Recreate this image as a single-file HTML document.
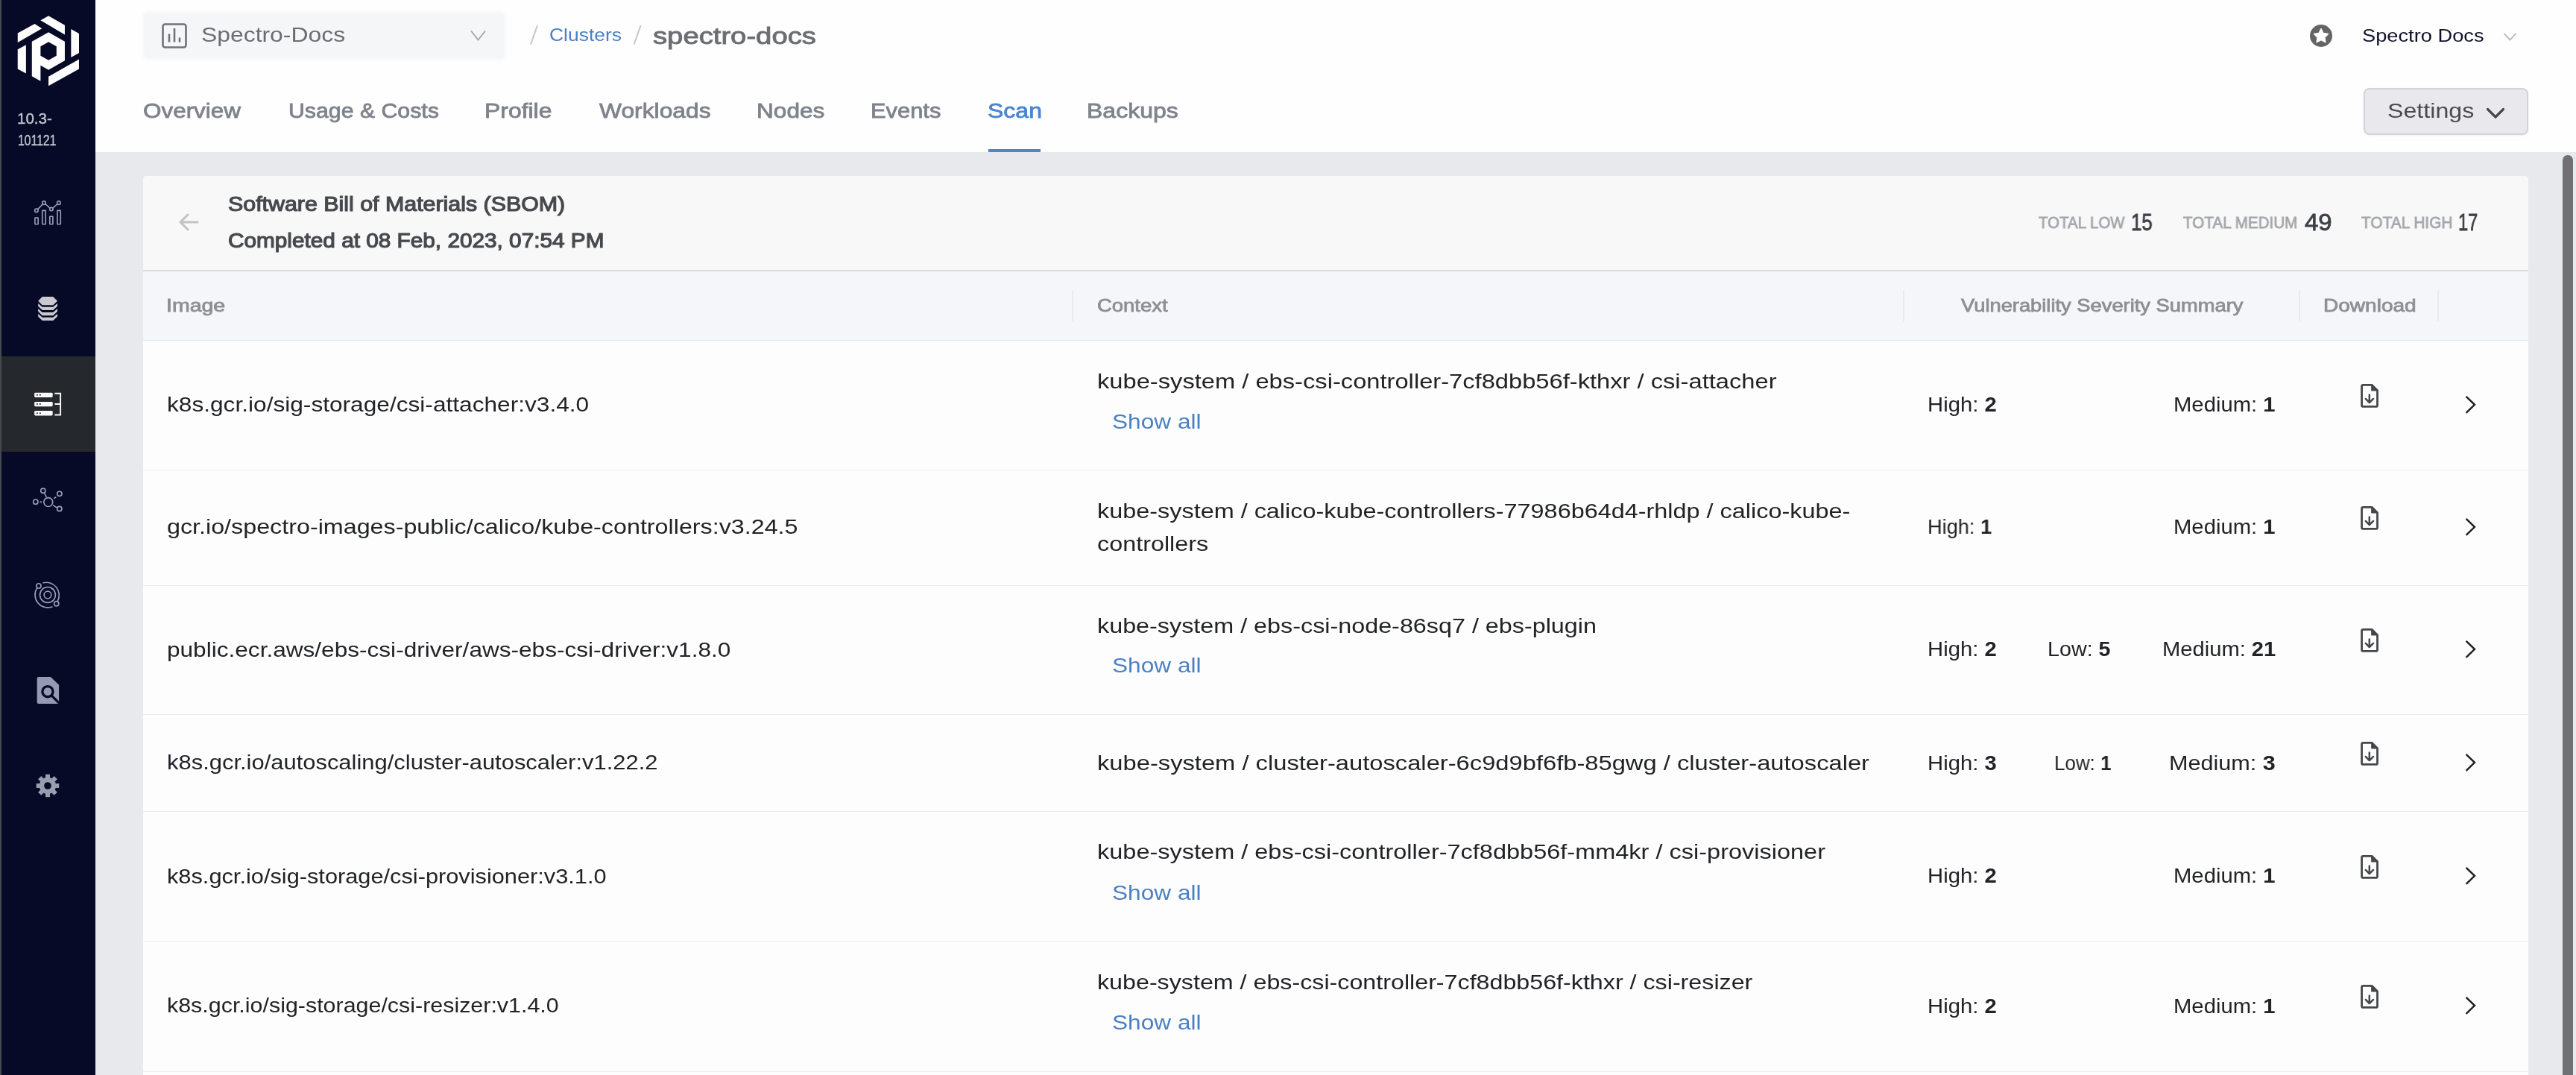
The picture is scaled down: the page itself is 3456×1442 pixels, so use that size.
<!DOCTYPE html>
<html><head><meta charset="utf-8"><title>Spectro Cloud - SBOM</title>
<style>
html,body{margin:0;padding:0}
body{width:3456px;height:1442px;overflow:hidden;position:relative;background:#e8e9ec;font-family:"Liberation Sans",sans-serif}
.a{position:absolute}
.t{position:absolute;white-space:nowrap;transform-origin:0 0;line-height:1;will-change:transform}
.t b{font-weight:bold}
svg{position:absolute;overflow:visible}
@media (max-width:2400px){body{zoom:0.5}}
</style></head><body>
<!-- sidebar -->
<div class="a" style="left:0;top:0;width:128px;height:1442px;background:#060a26"></div>
<div class="a" style="left:0;top:0;width:2px;height:1442px;background:#444b4e"></div>
<div class="a" style="left:2px;top:478px;width:126px;height:128px;background:#25282c"></div>
<svg style="left:20px;top:18px" width="90" height="100" viewBox="0 0 968 1075"><g fill="#fdfdfd">
<polygon points="40,285 285,150 390,218 40,420"/>
<polygon points="370,100 485,35 720,170 720,305"/>
<polygon points="810,225 925,290 925,570 810,635"/>
<polygon points="485,910 925,660 925,800 485,1045"/>
<polygon points="40,520 160,455 160,865 40,800"/>
<path fill-rule="evenodd" d="M245,405 L485,270 L720,405 L720,680 L485,815 L370,750 L370,975 L245,905 Z M485,410 L600,475 L600,610 L485,675 L370,610 L370,475 Z"/>
</g></svg>
<!-- chart icon -->
<svg style="left:24px;top:240px" width="80" height="80" viewBox="0 0 1075 1075"><g fill="none" stroke="#9a9cb8" stroke-width="22">
<rect x="308" y="700" width="57" height="117" rx="8"/><rect x="440" y="570" width="60" height="247" rx="8"/>
<rect x="575" y="675" width="55" height="142" rx="8"/><rect x="710" y="570" width="60" height="247" rx="8"/>
<circle cx="335" cy="570" r="30"/><circle cx="470" cy="432" r="30"/><circle cx="603" cy="545" r="30"/><circle cx="738" cy="432" r="30"/>
<path d="M356,549 L449,453 M494,450 L579,526 M627,528 L714,450"/>
</g></svg>
<!-- db icon -->
<svg style="left:24px;top:372px" width="80" height="80" viewBox="0 0 1075 1075"><g fill="#c8cad0">
<polygon points="440,350 635,350 712,425 635,500 440,500 365,425"/>
<polygon points="365,470 440,535 635,535 712,470 712,520 635,592 440,592 365,520"/>
<polygon points="365,565 440,630 635,630 712,565 712,615 635,687 440,687 365,615"/>
<polygon points="365,658 440,722 635,722 712,658 712,705 635,778 440,778 365,705"/>
</g></svg>
<!-- servers icon (selected) -->
<svg style="left:0px;top:460px" width="128" height="160" viewBox="0 0 860 1075">
<g fill="#fafafa"><rect x="310" y="448" width="165" height="42" rx="10"/><rect x="310" y="530" width="165" height="42" rx="10"/><rect x="310" y="612" width="165" height="43" rx="10"/></g>
<g fill="#25282c"><circle cx="335" cy="469" r="7"/><circle cx="362" cy="469" r="7"/><circle cx="335" cy="551" r="7"/><circle cx="362" cy="551" r="7"/><circle cx="335" cy="633" r="7"/><circle cx="362" cy="633" r="7"/></g>
<path d="M493,455 H545 V648 H493 M493,551 H545" fill="none" stroke="#fafafa" stroke-width="13"/>
</svg>
<!-- network icon -->
<svg style="left:24px;top:630px" width="80" height="80" viewBox="0 0 1075 1075"><g fill="none" stroke="#9a9cb8" stroke-width="22">
<circle cx="548" cy="585" r="80"/><circle cx="455" cy="380" r="42"/><circle cx="750" cy="435" r="42"/><circle cx="320" cy="580" r="42"/><circle cx="750" cy="705" r="42"/>
<path d="M478,420 L515,500 M648,520 L690,492 M398,582 L432,582 M630,640 L712,688"/>
</g></svg>
<!-- orbit icon -->
<svg style="left:24px;top:758px" width="80" height="80" viewBox="0 0 1075 1075"><g fill="none" stroke="#9a9cb8" stroke-width="22">
<circle cx="537" cy="537" r="65"/><circle cx="537" cy="537" r="140"/>
<path d="M450,322 A230,230 0 0 1 718,648"/><path d="M342,418 A230,230 0 0 0 625,750"/>
<circle cx="375" cy="375" r="42"/><circle cx="695" cy="695" r="42"/>
</g><circle cx="628" cy="430" r="16" fill="#9a9cb8"/></svg>
<!-- search doc icon -->
<svg style="left:24px;top:886px" width="80" height="80" viewBox="0 0 1075 1075">
<path d="M375,295 L590,295 L740,440 L740,750 Q740,780 710,780 L375,780 Q345,780 345,750 L345,325 Q345,295 375,295 Z" fill="#9799b3"/>
<g fill="none" stroke="#060a26" stroke-width="45"><circle cx="537" cy="560" r="95"/><path d="M605,630 L740,765"/></g>
</svg>
<!-- gear icon -->
<svg style="left:24px;top:1014px" width="80" height="80" viewBox="0 0 1075 1075"><g fill="#9a9cb0">
<g transform="translate(537,537)">
<rect x="-40" y="-205" width="80" height="410"/><rect x="-40" y="-205" width="80" height="410" transform="rotate(45)"/>
<rect x="-40" y="-205" width="80" height="410" transform="rotate(90)"/><rect x="-40" y="-205" width="80" height="410" transform="rotate(135)"/>
<circle r="150"/></g></g><circle cx="537" cy="537" r="65" fill="#060a26"/></svg>

<!-- header -->
<div class="a" style="left:128px;top:0;width:3328px;height:204px;background:#fefefe"></div>
<div class="a" style="left:194px;top:18px;width:482px;height:60px;background:#f5f6f8;border-radius:4px;box-shadow:0 0 5px 2px #f5f6f8"></div>
<svg style="left:0;top:0" width="3456" height="210" viewBox="0 0 3456 210">
<rect x="218.5" y="32.5" width="31" height="31" rx="3" fill="none" stroke="#6f7378" stroke-width="2.6"/>
<path d="M227,45.5 V56.5 M234,38 V56.5 M241,50.5 V56.5" stroke="#6f7378" stroke-width="2.6" fill="none"/>
<path d="M632,41.5 L641.5,53.5 L651,41.5" stroke="#a3a6aa" stroke-width="1.8" fill="none"/>
<path d="M721,34 L712,59.5 M859.6,34 L850.6,59.5" stroke="#c8c9cc" stroke-width="2.2"/>
<circle cx="3114" cy="48" r="15" fill="#646467"/>
<polygon fill="#fefefe" stroke="#fefefe" stroke-width="1.4" stroke-linejoin="round" points="3114.0,38.6 3117.0,44.5 3123.5,45.5 3118.9,50.2 3119.9,56.7 3114.0,53.7 3108.1,56.7 3109.1,50.2 3104.5,45.5 3111.0,44.5"/>
<path d="M3359.5,45 L3367.5,53.5 L3375.5,45" stroke="#b0b2b5" stroke-width="1.8" fill="none"/>
<rect x="1326" y="200" width="70" height="4" fill="#4a86d0"/>
</svg>
<div class="a" style="left:3171px;top:118px;width:217px;height:59px;background:#e9e9ed;border:2px solid #d2d3d6;border-radius:8px;box-shadow:0 1px 3px rgba(0,0,0,0.06)"></div>
<svg style="left:0;top:0" width="3456" height="210" viewBox="0 0 3456 210">
<path d="M3337.5,146.5 L3348,157 L3358.5,146.5" stroke="#45474c" stroke-width="3.2" fill="none" stroke-linecap="round" stroke-linejoin="round"/>
</svg>

<!-- card -->
<div class="a" style="left:192px;top:236px;width:3200px;height:1300px;background:#fdfdfe;border-radius:5px 5px 0 0;overflow:hidden">
  <div class="a" style="left:0;top:0;width:3200px;height:126px;background:#f8f8f9"></div>
  <div class="a" style="left:0;top:126px;width:3200px;height:2px;background:#d9dadd"></div>
  <div class="a" style="left:0;top:128px;width:3200px;height:92px;background:#f5f6f9"></div>
  <div class="a" style="left:0;top:220px;width:3200px;height:1px;background:#e4e5e8"></div>
  <div class="a" style="left:0;top:394px;width:3200px;height:1px;background:#ebebee"></div>
  <div class="a" style="left:0;top:549px;width:3200px;height:1px;background:#ebebee"></div>
  <div class="a" style="left:0;top:722px;width:3200px;height:1px;background:#ebebee"></div>
  <div class="a" style="left:0;top:852px;width:3200px;height:1px;background:#ebebee"></div>
  <div class="a" style="left:0;top:1026px;width:3200px;height:1px;background:#ebebee"></div>
  <div class="a" style="left:0;top:1201px;width:3200px;height:1px;background:#ebebee"></div>
  <div class="a" style="left:1246px;top:153px;width:2px;height:42px;background:#e9eaed"></div>
  <div class="a" style="left:2361px;top:153px;width:2px;height:42px;background:#e9eaed"></div>
  <div class="a" style="left:2892px;top:153px;width:2px;height:42px;background:#e9eaed"></div>
  <div class="a" style="left:3078px;top:153px;width:2px;height:42px;background:#e9eaed"></div>
</div>
<svg style="left:0;top:0" width="3456" height="1442" viewBox="0 0 3456 1442">
<path d="M265,298 H242.5 M252,288 L242,298 L252,308" stroke="#c2c3c6" stroke-width="3" fill="none" stroke-linecap="round" stroke-linejoin="round"/>
</svg>
<svg style="left:3140px;top:500.0px" width="200" height="80" viewBox="0 0 2576 1030"><path d="M395,212 L545,212 L638,305 L638,560 Q638,585 613,585 L393,585 Q368,585 368,560 L368,237 Q368,212 393,212 Z" fill="none" stroke="#45474a" stroke-width="36" stroke-linejoin="round"/><path d="M540,215 L540,305 L635,305 Z" fill="#45474a" stroke="#45474a" stroke-width="20" stroke-linejoin="round"/><path d="M500,380 V510 M435,450 L500,515 L567,450" fill="none" stroke="#45474a" stroke-width="32" stroke-linecap="round" stroke-linejoin="round"/><path d="M2172,410 L2318,552 L2172,695" fill="none" stroke="#1f2024" stroke-width="32"/></svg>
<svg style="left:3140px;top:664.0px" width="200" height="80" viewBox="0 0 2576 1030"><path d="M395,212 L545,212 L638,305 L638,560 Q638,585 613,585 L393,585 Q368,585 368,560 L368,237 Q368,212 393,212 Z" fill="none" stroke="#45474a" stroke-width="36" stroke-linejoin="round"/><path d="M540,215 L540,305 L635,305 Z" fill="#45474a" stroke="#45474a" stroke-width="20" stroke-linejoin="round"/><path d="M500,380 V510 M435,450 L500,515 L567,450" fill="none" stroke="#45474a" stroke-width="32" stroke-linecap="round" stroke-linejoin="round"/><path d="M2172,410 L2318,552 L2172,695" fill="none" stroke="#1f2024" stroke-width="32"/></svg>
<svg style="left:3140px;top:828.3px" width="200" height="80" viewBox="0 0 2576 1030"><path d="M395,212 L545,212 L638,305 L638,560 Q638,585 613,585 L393,585 Q368,585 368,560 L368,237 Q368,212 393,212 Z" fill="none" stroke="#45474a" stroke-width="36" stroke-linejoin="round"/><path d="M540,215 L540,305 L635,305 Z" fill="#45474a" stroke="#45474a" stroke-width="20" stroke-linejoin="round"/><path d="M500,380 V510 M435,450 L500,515 L567,450" fill="none" stroke="#45474a" stroke-width="32" stroke-linecap="round" stroke-linejoin="round"/><path d="M2172,410 L2318,552 L2172,695" fill="none" stroke="#1f2024" stroke-width="32"/></svg>
<svg style="left:3140px;top:980.0px" width="200" height="80" viewBox="0 0 2576 1030"><path d="M395,212 L545,212 L638,305 L638,560 Q638,585 613,585 L393,585 Q368,585 368,560 L368,237 Q368,212 393,212 Z" fill="none" stroke="#45474a" stroke-width="36" stroke-linejoin="round"/><path d="M540,215 L540,305 L635,305 Z" fill="#45474a" stroke="#45474a" stroke-width="20" stroke-linejoin="round"/><path d="M500,380 V510 M435,450 L500,515 L567,450" fill="none" stroke="#45474a" stroke-width="32" stroke-linecap="round" stroke-linejoin="round"/><path d="M2172,410 L2318,552 L2172,695" fill="none" stroke="#1f2024" stroke-width="32"/></svg>
<svg style="left:3140px;top:1131.8px" width="200" height="80" viewBox="0 0 2576 1030"><path d="M395,212 L545,212 L638,305 L638,560 Q638,585 613,585 L393,585 Q368,585 368,560 L368,237 Q368,212 393,212 Z" fill="none" stroke="#45474a" stroke-width="36" stroke-linejoin="round"/><path d="M540,215 L540,305 L635,305 Z" fill="#45474a" stroke="#45474a" stroke-width="20" stroke-linejoin="round"/><path d="M500,380 V510 M435,450 L500,515 L567,450" fill="none" stroke="#45474a" stroke-width="32" stroke-linecap="round" stroke-linejoin="round"/><path d="M2172,410 L2318,552 L2172,695" fill="none" stroke="#1f2024" stroke-width="32"/></svg>
<svg style="left:3140px;top:1306.3px" width="200" height="80" viewBox="0 0 2576 1030"><path d="M395,212 L545,212 L638,305 L638,560 Q638,585 613,585 L393,585 Q368,585 368,560 L368,237 Q368,212 393,212 Z" fill="none" stroke="#45474a" stroke-width="36" stroke-linejoin="round"/><path d="M540,215 L540,305 L635,305 Z" fill="#45474a" stroke="#45474a" stroke-width="20" stroke-linejoin="round"/><path d="M500,380 V510 M435,450 L500,515 L567,450" fill="none" stroke="#45474a" stroke-width="32" stroke-linecap="round" stroke-linejoin="round"/><path d="M2172,410 L2318,552 L2172,695" fill="none" stroke="#1f2024" stroke-width="32"/></svg>
<!-- scrollbar -->
<div class="a" style="left:3438px;top:208px;width:14px;height:1250px;background:#707074;border-radius:7px"></div>
<div class="t" style="left:23.4px;top:149.1px;font-size:20px;font-weight:normal;color:#c3c5d0;transform:scaleX(1.0245);-webkit-text-stroke:0.4px #c3c5d0">10.3-</div>
<div class="t" style="left:23.6px;top:177.6px;font-size:20px;font-weight:normal;color:#c3c5d0;transform:scaleX(0.7859);-webkit-text-stroke:0.4px #c3c5d0">101121</div>
<div class="t" style="left:269.7px;top:33.3px;font-size:28px;font-weight:normal;color:#6a6e73;transform:scaleX(1.1383)">Spectro-Docs</div>
<div class="t" style="left:736.5px;top:35.3px;font-size:24px;font-weight:normal;color:#4a7fc1;transform:scaleX(1.1021)">Clusters</div>
<div class="t" style="left:875.9px;top:31.5px;font-size:32px;font-weight:normal;color:#6b6e73;transform:scaleX(1.1949);-webkit-text-stroke:0.9px #6b6e73">spectro-docs</div>
<div class="t" style="left:3169.3px;top:35.7px;font-size:24px;font-weight:normal;color:#10122a;transform:scaleX(1.1352)">Spectro Docs</div>
<div class="t" style="left:191.7px;top:135.2px;font-size:28px;font-weight:normal;color:#7f838b;transform:scaleX(1.1222);-webkit-text-stroke:0.8px #7f838b">Overview</div>
<div class="t" style="left:386.5px;top:135.2px;font-size:28px;font-weight:normal;color:#7f838b;transform:scaleX(1.0809);-webkit-text-stroke:0.8px #7f838b">Usage &amp; Costs</div>
<div class="t" style="left:649.7px;top:135.2px;font-size:28px;font-weight:normal;color:#7f838b;transform:scaleX(1.1394);-webkit-text-stroke:0.8px #7f838b">Profile</div>
<div class="t" style="left:803.5px;top:135.2px;font-size:28px;font-weight:normal;color:#7f838b;transform:scaleX(1.1357);-webkit-text-stroke:0.8px #7f838b">Workloads</div>
<div class="t" style="left:1014.7px;top:135.2px;font-size:28px;font-weight:normal;color:#7f838b;transform:scaleX(1.1291);-webkit-text-stroke:0.8px #7f838b">Nodes</div>
<div class="t" style="left:1167.8px;top:135.2px;font-size:28px;font-weight:normal;color:#7f838b;transform:scaleX(1.1017);-webkit-text-stroke:0.8px #7f838b">Events</div>
<div class="t" style="left:1324.9px;top:135.2px;font-size:28px;font-weight:normal;color:#4a86d0;transform:scaleX(1.1429);-webkit-text-stroke:0.8px #4a86d0">Scan</div>
<div class="t" style="left:1458.4px;top:135.2px;font-size:28px;font-weight:normal;color:#7f838b;transform:scaleX(1.1428);-webkit-text-stroke:0.8px #7f838b">Backups</div>
<div class="t" style="left:3202.9px;top:135.3px;font-size:28px;font-weight:normal;color:#4a4b50;transform:scaleX(1.1495)">Settings</div>
<div class="t" style="left:305.9px;top:260.3px;font-size:28px;font-weight:normal;color:#47494d;transform:scaleX(1.0845);-webkit-text-stroke:1.2px #47494d">Software Bill of Materials (SBOM)</div>
<div class="t" style="left:305.9px;top:308.5px;font-size:28px;font-weight:normal;color:#47494d;transform:scaleX(1.0626);-webkit-text-stroke:1.2px #47494d">Completed at 08 Feb, 2023, 07:54 PM</div>
<div class="t" style="left:2734.6px;top:287.7px;font-size:22px;font-weight:normal;color:#a4a6ab;transform:scaleX(0.9288);-webkit-text-stroke:0.8px #a4a6ab">TOTAL LOW</div>
<div class="t" style="left:2859.4px;top:281.6px;font-size:32px;font-weight:normal;color:#3e4045;transform:scaleX(0.8080);-webkit-text-stroke:0.8px #3e4045">15</div>
<div class="t" style="left:2929.0px;top:287.7px;font-size:22px;font-weight:normal;color:#a4a6ab;transform:scaleX(0.9388);-webkit-text-stroke:0.8px #a4a6ab">TOTAL MEDIUM</div>
<div class="t" style="left:3091.8px;top:281.6px;font-size:32px;font-weight:normal;color:#3e4045;transform:scaleX(1.0317);-webkit-text-stroke:0.8px #3e4045">49</div>
<div class="t" style="left:3168.3px;top:287.7px;font-size:22px;font-weight:normal;color:#a4a6ab;transform:scaleX(0.9474);-webkit-text-stroke:0.8px #a4a6ab">TOTAL HIGH</div>
<div class="t" style="left:3298.1px;top:281.6px;font-size:32px;font-weight:normal;color:#3e4045;transform:scaleX(0.7379);-webkit-text-stroke:0.8px #3e4045">17</div>
<div class="t" style="left:222.6px;top:398.0px;font-size:24px;font-weight:normal;color:#8c8f95;transform:scaleX(1.1872);-webkit-text-stroke:0.8px #8c8f95">Image</div>
<div class="t" style="left:1471.9px;top:398.0px;font-size:24px;font-weight:normal;color:#8c8f95;transform:scaleX(1.1433);-webkit-text-stroke:0.8px #8c8f95">Context</div>
<div class="t" style="left:2631.0px;top:398.0px;font-size:24px;font-weight:normal;color:#8c8f95;transform:scaleX(1.1379);-webkit-text-stroke:0.8px #8c8f95">Vulnerability Severity Summary</div>
<div class="t" style="left:3116.6px;top:398.0px;font-size:24px;font-weight:normal;color:#8c8f95;transform:scaleX(1.1678);-webkit-text-stroke:0.8px #8c8f95">Download</div>
<div class="t" style="left:224.2px;top:528.8px;font-size:28px;font-weight:normal;color:#222326;transform:scaleX(1.1298)">k8s.gcr.io/sig-storage/csi-attacher:v3.4.0</div>
<div class="t" style="left:1471.8px;top:498.3px;font-size:28px;font-weight:normal;color:#222326;transform:scaleX(1.1669)">kube-system / ebs-csi-controller-7cf8dbb56f-kthxr / csi-attacher</div>
<div class="t" style="left:1492.4px;top:552.0px;font-size:28px;font-weight:normal;color:#4a80c4;transform:scaleX(1.1302)">Show all</div>
<div class="t" style="left:2585.9px;top:529.3px;font-size:28px;font-weight:normal;color:#222326;transform:scaleX(1.0448)">High: <b>2</b></div>
<div class="t" style="left:2916.2px;top:529.3px;font-size:28px;font-weight:normal;color:#222326;transform:scaleX(1.0449)">Medium: <b>1</b></div>
<div class="t" style="left:224.1px;top:693.0px;font-size:28px;font-weight:normal;color:#222326;transform:scaleX(1.1524)">gcr.io/spectro-images-public/calico/kube-controllers:v3.24.5</div>
<div class="t" style="left:1471.8px;top:671.7px;font-size:28px;font-weight:normal;color:#222326;transform:scaleX(1.1571)">kube-system / calico-kube-controllers-77986b64d4-rhldp / calico-kube-</div>
<div class="t" style="left:1471.8px;top:716.0px;font-size:28px;font-weight:normal;color:#222326;transform:scaleX(1.1553)">controllers</div>
<div class="t" style="left:2586.1px;top:693.3px;font-size:28px;font-weight:normal;color:#222326;transform:scaleX(0.9705)">High: <b>1</b></div>
<div class="t" style="left:2916.2px;top:693.3px;font-size:28px;font-weight:normal;color:#222326;transform:scaleX(1.0449)">Medium: <b>1</b></div>
<div class="t" style="left:224.2px;top:857.5px;font-size:28px;font-weight:normal;color:#222326;transform:scaleX(1.1278)">public.ecr.aws/ebs-csi-driver/aws-ebs-csi-driver:v1.8.0</div>
<div class="t" style="left:1471.8px;top:825.9px;font-size:28px;font-weight:normal;color:#222326;transform:scaleX(1.1541)">kube-system / ebs-csi-node-86sq7 / ebs-plugin</div>
<div class="t" style="left:1492.4px;top:879.0px;font-size:28px;font-weight:normal;color:#4a80c4;transform:scaleX(1.1302)">Show all</div>
<div class="t" style="left:2585.9px;top:857.3px;font-size:28px;font-weight:normal;color:#222326;transform:scaleX(1.0448)">High: <b>2</b></div>
<div class="t" style="left:2747.3px;top:857.3px;font-size:28px;font-weight:normal;color:#222326;transform:scaleX(1.0247)">Low: <b>5</b></div>
<div class="t" style="left:2900.5px;top:857.3px;font-size:28px;font-weight:normal;color:#222326;transform:scaleX(1.0409)">Medium: <b>21</b></div>
<div class="t" style="left:224.2px;top:1008.9px;font-size:28px;font-weight:normal;color:#222326;transform:scaleX(1.1046)">k8s.gcr.io/autoscaling/cluster-autoscaler:v1.22.2</div>
<div class="t" style="left:1471.8px;top:1009.7px;font-size:28px;font-weight:normal;color:#222326;transform:scaleX(1.1679)">kube-system / cluster-autoscaler-6c9d9bf6fb-85gwg / cluster-autoscaler</div>
<div class="t" style="left:2585.9px;top:1009.5px;font-size:28px;font-weight:normal;color:#222326;transform:scaleX(1.0448)">High: <b>3</b></div>
<div class="t" style="left:2756.3px;top:1009.5px;font-size:28px;font-weight:normal;color:#222326;transform:scaleX(0.9271)">Low: <b>1</b></div>
<div class="t" style="left:2910.0px;top:1009.5px;font-size:28px;font-weight:normal;color:#222326;transform:scaleX(1.0925)">Medium: <b>3</b></div>
<div class="t" style="left:224.2px;top:1161.5px;font-size:28px;font-weight:normal;color:#222326;transform:scaleX(1.0982)">k8s.gcr.io/sig-storage/csi-provisioner:v3.1.0</div>
<div class="t" style="left:1471.8px;top:1129.0px;font-size:28px;font-weight:normal;color:#222326;transform:scaleX(1.1606)">kube-system / ebs-csi-controller-7cf8dbb56f-mm4kr / csi-provisioner</div>
<div class="t" style="left:1492.4px;top:1183.7px;font-size:28px;font-weight:normal;color:#4a80c4;transform:scaleX(1.1302)">Show all</div>
<div class="t" style="left:2585.9px;top:1161.3px;font-size:28px;font-weight:normal;color:#222326;transform:scaleX(1.0448)">High: <b>2</b></div>
<div class="t" style="left:2916.2px;top:1161.3px;font-size:28px;font-weight:normal;color:#222326;transform:scaleX(1.0449)">Medium: <b>1</b></div>
<div class="t" style="left:224.2px;top:1335.3px;font-size:28px;font-weight:normal;color:#222326;transform:scaleX(1.0863)">k8s.gcr.io/sig-storage/csi-resizer:v1.4.0</div>
<div class="t" style="left:1471.8px;top:1304.0px;font-size:28px;font-weight:normal;color:#222326;transform:scaleX(1.1509)">kube-system / ebs-csi-controller-7cf8dbb56f-kthxr / csi-resizer</div>
<div class="t" style="left:1492.4px;top:1358.2px;font-size:28px;font-weight:normal;color:#4a80c4;transform:scaleX(1.1302)">Show all</div>
<div class="t" style="left:2585.9px;top:1335.8px;font-size:28px;font-weight:normal;color:#222326;transform:scaleX(1.0448)">High: <b>2</b></div>
<div class="t" style="left:2916.2px;top:1335.8px;font-size:28px;font-weight:normal;color:#222326;transform:scaleX(1.0449)">Medium: <b>1</b></div>
</body></html>
